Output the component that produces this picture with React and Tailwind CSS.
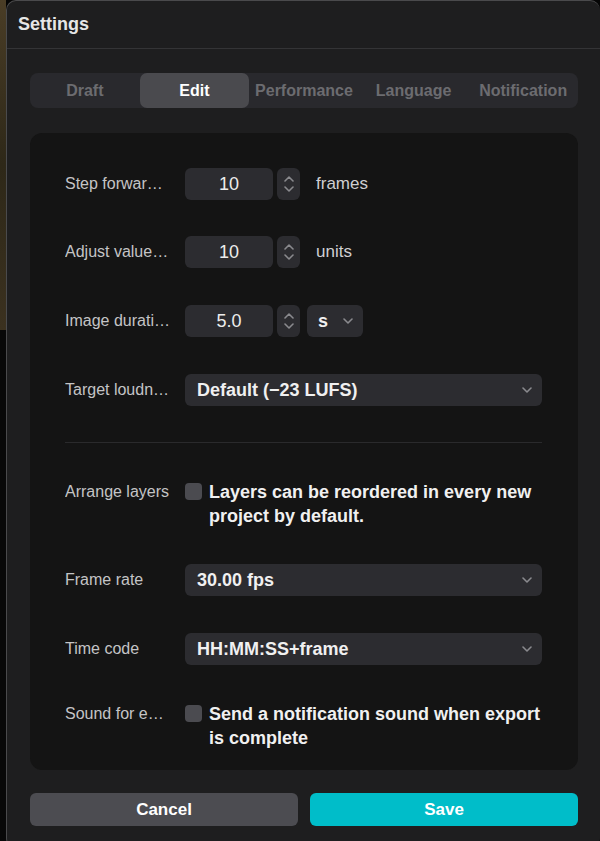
import React, { useState } from 'react';

const font = { fontFamily: '"Liberation Sans", Arial, sans-serif' };

const Chevron = ({ className = '' }) => (
  <svg width="10" height="6" viewBox="0 0 10 6" className={className}>
    <path d="M1 1l4 4 4-4" fill="none" stroke="currentColor" strokeWidth="1.6" strokeLinecap="round" strokeLinejoin="round" />
  </svg>
);

const Stepper = () => (
  <div className="w-[23px] h-[32px] rounded-[6px] bg-[#2c2c30] flex flex-col items-center justify-center gap-[4px] text-[#8a8a8e]">
    <svg width="10" height="6" viewBox="0 0 10 6">
      <path d="M1 5l4-4 4 4" fill="none" stroke="currentColor" strokeWidth="1.6" strokeLinecap="round" strokeLinejoin="round" />
    </svg>
    <svg width="10" height="6" viewBox="0 0 10 6">
      <path d="M1 1l4 4 4-4" fill="none" stroke="currentColor" strokeWidth="1.6" strokeLinecap="round" strokeLinejoin="round" />
    </svg>
  </div>
);

const Label = ({ children, top }) => (
  <div className={`w-[120px] shrink-0 pr-[15px] text-[16px] text-[#c4c4c6] truncate ${top ? 'leading-[24px]' : ''}`}>
    {children}
  </div>
);

const NumberRow = ({ label, value, unit, select }) => (
  <div className="flex items-center h-[32px]">
    <Label>{label}</Label>
    <div className="w-[88px] h-[32px] rounded-[6px] bg-[#2c2c30] flex items-center justify-center text-[18px] text-[#ececec]">
      {value}
    </div>
    <div className="ml-[4px]">
      <Stepper />
    </div>
    {select ? (
      <div className="ml-[7px] w-[56px] h-[32px] rounded-[6px] bg-[#2c2c30] flex items-center justify-between pl-[11px] pr-[10px] text-[18px] font-bold text-[#f0f0f0]">
        {select}
        <Chevron className="text-[#8a8a8e]" />
      </div>
    ) : (
      <div className="ml-[16px] text-[17px] text-[#cfcfd1]">{unit}</div>
    )}
  </div>
);

const SelectRow = ({ label, value }) => (
  <div className="flex items-center h-[32px]">
    <Label>{label}</Label>
    <div className="flex-1 min-w-0 h-[32px] rounded-[6px] bg-[#2c2c30] flex items-center justify-between pl-[12px] pr-[10px] text-[18px] font-bold text-[#f0f0f0]">
      {value}
      <Chevron className="text-[#8a8a8e]" />
    </div>
  </div>
);

const CheckRow = ({ label, children }) => {
  const [checked, setChecked] = useState(false);
  return (
    <div className="flex items-start">
      <Label top>{label}</Label>
      <button
        onClick={() => setChecked(!checked)}
        className="mt-[3px] w-[17px] h-[17px] shrink-0 rounded-[4px] bg-[#4b4b50]"
      />
      <div className="ml-[7px] -mr-[8px] flex-1 min-w-0 text-[18px] leading-[24px] font-bold text-[#f0f0f0]">{children}</div>
    </div>
  );
};

const tabs = ['Draft', 'Edit', 'Performance', 'Language', 'Notification'];

export default function App() {
  const [tab, setTab] = useState('Edit');

  return (
    <div className="w-[600px] h-[841px] bg-[#050505] flex overflow-hidden" style={font}>
      {/* background peeking out on the left */}
      <div className="w-[6px] shrink-0 flex flex-col">
        <div className="h-[330px] bg-gradient-to-b from-[#4a3d26] via-[#2e2818] to-[#3b311f]" />
        <div className="flex-1 bg-[#080808]" />
      </div>

      <div className="flex-1 min-w-0 h-[848px] bg-[#1e1e1f] rounded-[10px] border-l border-t border-[#4a4a4c] flex flex-col">
        {/* Header */}
        <div className="h-[48px] shrink-0 flex items-center px-[11px] border-b border-[#343436]">
          <h1 className="text-[18px] font-bold text-[#e6e6e6]">Settings</h1>
        </div>

        <div className="pl-[23px] pr-[22px] pt-[24px] flex flex-col">
          {/* Tabs */}
          <div className="h-[35px] rounded-[8px] bg-[#29292d] flex">
            {tabs.map(t => (
              <button
                key={t}
                onClick={() => setTab(t)}
                className={`flex-1 min-w-0 rounded-[7px] text-[16px] font-bold ${
                  tab === t ? 'bg-[#4a4a4e] text-white' : 'text-[#6c6c70]'
                }`}
              >
                {t}
              </button>
            ))}
          </div>

          {/* Panel */}
          <div className="mt-[25px] h-[637px] rounded-[12px] bg-[#141414] pl-[35px] pr-[36px] pt-[35px] flex flex-col">
            <NumberRow label="Step forward by" value="10" unit="frames" />
            <div className="mt-[36px]">
              <NumberRow label="Adjust value by" value="10" unit="units" />
            </div>
            <div className="mt-[37px]">
              <NumberRow label="Image duration" value="5.0" select="s" />
            </div>
            <div className="mt-[37px]">
              <SelectRow label="Target loudness" value="Default (−23 LUFS)" />
            </div>

            <div className="mt-[36px] h-px bg-[#2a2a2c]" />

            <div className="mt-[37px]">
              <CheckRow label="Arrange layers">
                Layers can be reordered in every new project by default.
              </CheckRow>
            </div>
            <div className="mt-[36px]">
              <SelectRow label="Frame rate" value="30.00 fps" />
            </div>
            <div className="mt-[37px]">
              <SelectRow label="Time code" value="HH:MM:SS+frame" />
            </div>
            <div className="mt-[37px]">
              <CheckRow label="Sound for export">
                Send a notification sound when export is complete
              </CheckRow>
            </div>
          </div>

          {/* Footer */}
          <div className="mt-[23px] flex gap-[12px]">
            <button className="flex-1 h-[33px] rounded-[6px] bg-[#4c4c51] text-[17px] font-bold text-white">
              Cancel
            </button>
            <button className="flex-1 h-[33px] rounded-[6px] bg-[#00bdc9] text-[17px] font-bold text-white">
              Save
            </button>
          </div>
        </div>
      </div>
    </div>
  );
}
